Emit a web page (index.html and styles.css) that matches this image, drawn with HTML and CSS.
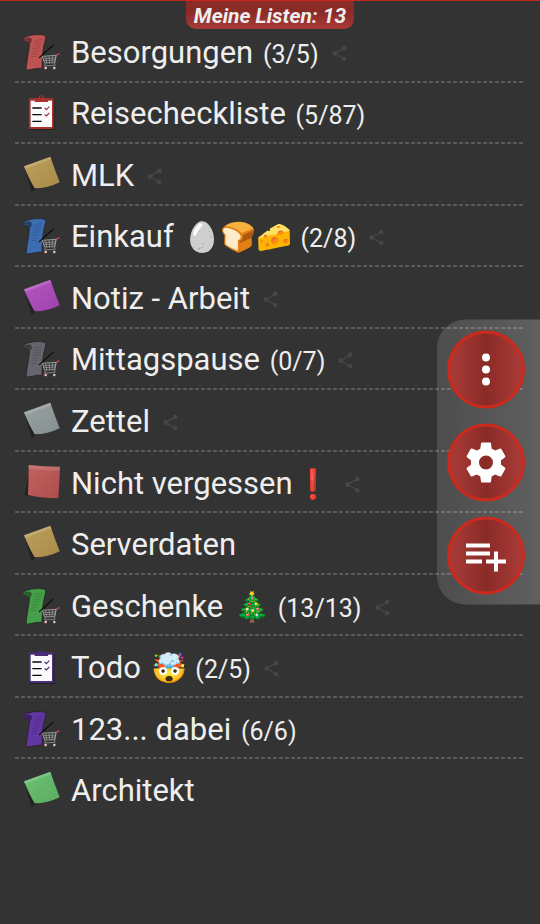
FILE: index.html
```
<!DOCTYPE html>
<html lang="de">
<head>
  <meta charset="utf-8">
  <meta name="viewport" content="width=device-width, initial-scale=1">
  <title>Meine Listen</title>
  <link rel="stylesheet" href="styles.css">
</head>
<body>
  <!-- icons -->
  <svg class="sprite" aria-hidden="true">
    <defs>
      <linearGradient id="shine" x1="0" y1="0" x2="1" y2="1">
        <stop offset="0" stop-color="#fff" stop-opacity=".08"/>
        <stop offset="1" stop-color="#000" stop-opacity=".08"/>
      </linearGradient>
    </defs>
    <symbol id="icon-shopping" viewBox="40 20 114 114">
      <path d="M40 42C41 34 50 29 58 28C74 24 94 24 106 27C109 31 108 38 106 44C102 58 99 76 98 92L97 126C82 124 68 130 53 131C49 131 49 127 50 122C52 100 58 76 60 50Z" fill="currentColor" stroke="#1d1a1c" stroke-width="2" stroke-linejoin="round"/>
      <path d="M40 43C42 33 60 30 66 38C68 44 64 50 60 53C58 46 50 41 40 43Z" fill="currentColor"/>
      <path d="M40 43C42 33 60 30 66 38C68 44 64 50 60 53C58 46 50 41 40 43Z" fill="#000" opacity=".4"/>
      <path d="M73 44l24-5M72 52l24-5M70 60l24-5M68 68l24-5M67 76l22-4M65 84l21-4M64 92l18-3" stroke="#000" stroke-width="1.5" opacity=".3"/>
      <path d="M130 57L98 86L89 94" fill="none" stroke="#0c0c0c" stroke-width="3.5" stroke-linecap="round"/>
      <path d="M98 90L139 87L135 109L105 110Z" fill="#353535" stroke="#aaa" stroke-width="2.5"/>
      <path d="M100 97l37-2M102 103l34-2M108 90l3 19M118 89l2 20M129 88l-2 21M148 84l-8 2-5 23 1 8-31 2 2-8" fill="none" stroke="#a5a5a5" stroke-width="2"/>
      <path d="M141 85l9-3" stroke="#d8372c" stroke-width="3.5"/>
      <circle cx="108" cy="125" r="4" fill="#d8cccc"/>
      <circle cx="134" cy="125" r="4" fill="#d8cccc"/>
      <path d="M103 124v3M138 124v3M111 127v2M131 127v2" stroke="#c4403a" stroke-width="3"/>
    </symbol>
    <symbol id="icon-check" viewBox="40 25 114 114">
      <rect x="59" y="40" width="76" height="93" rx="3" fill="#000" opacity=".35"/>
      <rect x="58" y="38" width="74" height="92" rx="3" fill="currentColor"/>
      <rect x="63" y="45" width="64" height="79" fill="#fbfafc"/>
      <path d="M75 49V42Q75 37 82 37H87A8 8 0 1 1 103 37H108Q115 37 115 42V49Z" fill="currentColor"/>
      <circle cx="95" cy="34" r="3.5" fill="#333"/>
      <path d="M68 67h28M68 87h28M68 107h28" stroke="#0a0a0a" stroke-width="4"/>
      <path d="M105 67l5 5 9-9M105 86l5 5 9-9" fill="none" stroke="currentColor" stroke-width="3.5"/>
    </symbol>
    <symbol id="icon-note" viewBox="40 211 114 114">
      <path d="M46 250L65 318Q75 314 84 306L60 270Z" fill="#1d1d1d" opacity=".7"/>
      <path d="M43 242L122 213Q136 254 150 290Q114 308 75 308Q60 284 43 242Z" fill="currentColor"/>
      <path d="M43 242L122 213Q136 254 150 290Q114 308 75 308Q60 284 43 242Z" fill="url(#shine)"/>
      <path d="M43 242L122 213L125 221L46 250Z" fill="#fff" opacity=".16"/>
    </symbol>
    <symbol id="icon-note-flat" viewBox="40 400 114 114">
      <path d="M57 430L44 492Q54 497 70 496Z" fill="#1d1d1d" opacity=".7"/>
      <path d="M57 403Q104 408 151 408Q149 456 146 503Q98 503 55 493Q57 448 57 403Z" fill="currentColor"/>
      <path d="M57 403Q104 408 151 408Q149 456 146 503Q98 503 55 493Q57 448 57 403Z" fill="url(#shine)"/>
      <path d="M57 403Q104 408 151 408L150 419Q104 420 57 415Z" fill="#fff" opacity=".12"/>
    </symbol>
    <symbol id="icon-share" viewBox="0 0 24 24">
      <path d="M18 16.1c-.8 0-1.4.3-2 .8l-7.1-4.2c.1-.2.1-.5.1-.7s0-.5-.1-.7L16 7.200c.5.5 1.200.8 2 .8a3 3 0 1 0-3-3c0 .2 0 .5.1.7L8 9.800a3 3 0 1 0 0 4.400l7.100 4.200c-.1.2-.1.4-.1.600a2.900 2.900 0 1 0 3-2.900z"/>
    </symbol>
  </svg>

  <header class="topbar">
    <h1 class="topbar-title">Meine Listen: 13</h1>
  </header>

  <main>
    <ul class="lists">
      <li><a class="list" href="#"><svg class="list-icon red"><use href="#icon-shopping"/></svg><span class="list-name">Besorgungen <small>(3/5)</small><svg class="share"><use href="#icon-share"/></svg></span></a></li>
      <li><a class="list" href="#"><svg class="list-icon darkred"><use href="#icon-check"/></svg><span class="list-name">Reisecheckliste <small>(5/87)</small></span></a></li>
      <li><a class="list" href="#"><svg class="list-icon sand"><use href="#icon-note"/></svg><span class="list-name">MLK<svg class="share"><use href="#icon-share"/></svg></span></a></li>
      <li><a class="list" href="#"><svg class="list-icon blue"><use href="#icon-shopping"/></svg><span class="list-name">Einkauf <span class="emoji"><span class="white">🥚</span>🍞🧀</span> <small>(2/8)</small><svg class="share"><use href="#icon-share"/></svg></span></a></li>
      <li><a class="list" href="#"><svg class="list-icon pink"><use href="#icon-note"/></svg><span class="list-name">Notiz - Arbeit<svg class="share"><use href="#icon-share"/></svg></span></a></li>
      <li><a class="list" href="#"><svg class="list-icon gray"><use href="#icon-shopping"/></svg><span class="list-name">Mittagspause <small>(0/7)</small><svg class="share"><use href="#icon-share"/></svg></span></a></li>
      <li><a class="list" href="#"><svg class="list-icon silver"><use href="#icon-note"/></svg><span class="list-name">Zettel<svg class="share"><use href="#icon-share"/></svg></span></a></li>
      <li><a class="list" href="#"><svg class="list-icon red"><use href="#icon-note-flat"/></svg><span class="list-name">Nicht vergessen<span class="emoji">❗</span><svg class="share"><use href="#icon-share"/></svg></span></a></li>
      <li><a class="list" href="#"><svg class="list-icon sand"><use href="#icon-note"/></svg><span class="list-name">Serverdaten</span></a></li>
      <li><a class="list" href="#"><svg class="list-icon green"><use href="#icon-shopping"/></svg><span class="list-name">Geschenke <span class="emoji">🎄</span> <small>(13/13)</small><svg class="share"><use href="#icon-share"/></svg></span></a></li>
      <li><a class="list" href="#"><svg class="list-icon purple"><use href="#icon-check"/></svg><span class="list-name">Todo <span class="emoji">🤯</span> <small>(2/5)</small><svg class="share"><use href="#icon-share"/></svg></span></a></li>
      <li><a class="list" href="#"><svg class="list-icon violet"><use href="#icon-shopping"/></svg><span class="list-name">123... dabei <small>(6/6)</small></span></a></li>
      <li><a class="list" href="#"><svg class="list-icon mint"><use href="#icon-note"/></svg><span class="list-name">Architekt</span></a></li>
    </ul>
  </main>

  <nav class="actions">
    <button class="action" type="button" aria-label="Menü">
      <svg viewBox="0 0 24 24"><path d="M12 8a2 2 0 1 0 0-4 2 2 0 0 0 0 4zm0 2a2 2 0 1 0 0 4 2 2 0 0 0 0-4zm0 6a2 2 0 1 0 0 4 2 2 0 0 0 0-4z"/></svg>
    </button>
    <button class="action" type="button" aria-label="Einstellungen">
      <svg viewBox="0 0 24 24"><path d="M19.430 12.980c.04-.32.07-.64.07-.98s-.03-.66-.07-.98l2.110-1.650c.19-.15.24-.42.12-.64l-2-3.460c-.12-.22-.39-.3-.61-.22l-2.490 1c-.52-.4-1.080-.73-1.690-.98l-.38-2.650C14.460 2.180 14.250 2 14 2h-4c-.25 0-.46.18-.49.42l-.38 2.650c-.61.25-1.170.59-1.690.98l-2.490-1c-.23-.09-.49 0-.61.22l-2 3.460c-.13.22-.07.49.12.64l2.110 1.650c-.04.32-.07.65-.07.98s.03.66.07.98l-2.110 1.650c-.19.15-.24.42-.12.64l2 3.460c.12.22.39.3.61.22l2.490-1c.52.4 1.080.73 1.690.98l.38 2.650c.03.24.24.42.49.42h4c.25 0 .46-.18.49-.42l.38-2.650c.61-.25 1.170-.59 1.690-.98l2.490 1c.23.09.49 0 .61-.22l2-3.460c.12-.22.07-.49-.12-.64l-2.110-1.650zM12 15.500a3.500 3.500 0 1 1 0-7 3.500 3.500 0 0 1 0 7z"/></svg>
    </button>
    <button class="action" type="button" aria-label="Neue Liste">
      <svg viewBox="0 0 24 24"><path d="M14 10H2v2h12v-2zm0-4H2v2h12V6zm4 8v-4h-2v4h-4v2h4v4h2v-4h4v-2h-4zM2 16h8v-2H2v2z"/></svg>
    </button>
  </nav>
</body>
</html>
```

FILE: styles.css
```
* {
  box-sizing: border-box;
}

body {
  margin: 0;
  min-height: 100vh;
  background: #333;
  color: #eee;
  font-family: Roboto, "Noto Color Emoji", sans-serif;
}

.sprite {
  position: absolute;
  width: 0;
  height: 0;
}

/* header */
.topbar {
  display: flex;
  justify-content: center;
  height: 21px;
  border-top: 1px solid #c3271e;
}

.topbar-title {
  height: 28px;
  margin: 0;
  padding: 0 8px;
  border-radius: 0 0 10px 10px;
  background: linear-gradient(#8a2b28 40%, #a93b37);
  font-size: 21px;
  font-style: italic;
  font-weight: 700;
  line-height: 30px;
}

/* lists */
.lists {
  display: grid;
  grid-auto-rows: 1fr;
  min-height: 800px;
  margin: 0 17px 0 15px;
  padding: 0;
  list-style: none;
}

.lists li {
  display: flex;
  background: repeating-linear-gradient(90deg, #5a5a5a 0 4px, transparent 4px 6px) left bottom / 100% 2px no-repeat;
}

.lists li:last-child {
  background: none;
}

.list {
  display: flex;
  flex: 1;
  align-items: center;
  gap: 10px;
  padding-left: 8px;
  color: inherit;
  text-decoration: none;
}

.list-icon {
  flex: none;
  width: 38px;
  height: 38px;
}

.list-name {
  padding-top: 2px;
  font-size: 31px;
  line-height: 38px;
}

.list-name small {
  margin-left: 2px;
  font-size: 25px;
  line-height: 1;
}

.emoji {
  margin-left: 3px;
  font-size: 29px;
  line-height: 1;
}

.list-name .emoji + small {
  margin-left: 0;
}

.emoji .white {
  filter: grayscale(1) brightness(1.2);
}

.share {
  width: 19px;
  height: 19px;
  margin-left: 11px;
  fill: #464646;
}

.red { color: #bd5452; }
.darkred { color: #a9332f; }
.sand { color: #b8974f; }
.blue { color: #3c6db3; }
.pink { color: #ad48bb; }
.gray { color: #66646d; }
.silver { color: #919b9b; }
.green { color: #45a049; }
.purple { color: #4a2c78; }
.violet { color: #6236a3; }
.mint { color: #62bb69; }

/* floating buttons */
.actions {
  position: fixed;
  top: 50%;
  right: 0;
  display: flex;
  flex-direction: column;
  gap: 15px;
  padding: 11px 15px 10px 10px;
  border-radius: 28px 0 0 28px;
  background: linear-gradient(90deg, rgba(255, 255, 255, .13), rgba(255, 255, 255, .22));
  transform: translateY(-50%);
}

.action {
  display: flex;
  align-items: center;
  justify-content: center;
  width: 78px;
  height: 78px;
  padding: 0;
  border: 3px solid #cb2a1d;
  border-radius: 50%;
  background: linear-gradient(90deg, #a93b37, #8a2b28 50%, #a93b37);
}

.action svg {
  width: 48px;
  height: 48px;
  fill: #fff;
}
```
